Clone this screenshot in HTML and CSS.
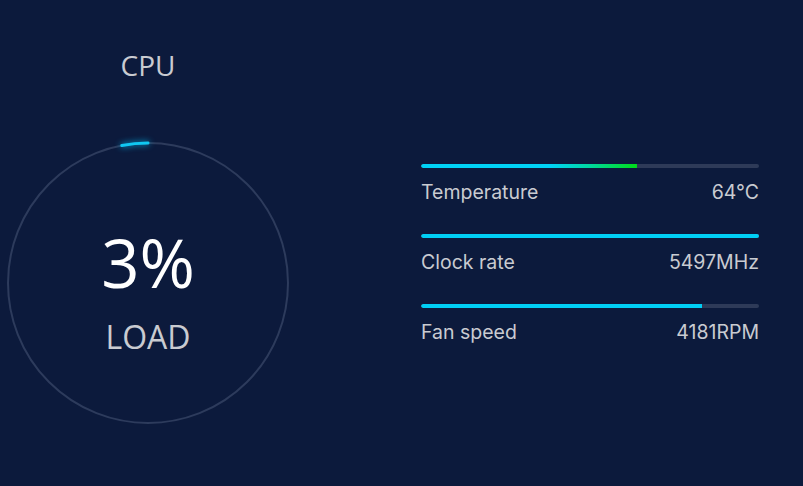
FILE: index.html
```html
<!DOCTYPE html>
<html>
<head>
<meta charset="utf-8">
<link rel="stylesheet" href="styles.css">
</head>
<body>
<div class="panel">
  <div class="left">
    <div class="title">CPU</div>
    <div class="gauge">
      <svg class="ring" width="296" height="296" viewBox="0 0 296 296">
        <circle class="track" cx="148" cy="148" r="140"></circle>
        <path class="arc" d="M121.77 10.48 A140 140 0 0 1 148 8"></path>
      </svg>
      <div class="readout">
        <div class="value">3%</div>
        <div class="label">LOAD</div>
      </div>
    </div>
  </div>
  <div class="right">
    <div class="stat">
      <div class="bar"><div class="fill fill-temp" style="width:64%"></div></div>
      <div class="row"><span>Temperature</span><span>64°C</span></div>
    </div>
    <div class="stat">
      <div class="bar"><div class="fill" style="width:100%"></div></div>
      <div class="row"><span>Clock rate</span><span>5497MHz</span></div>
    </div>
    <div class="stat">
      <div class="bar"><div class="fill" style="width:83.1%"></div></div>
      <div class="row"><span>Fan speed</span><span>4181RPM</span></div>
    </div>
  </div>
</div>
</body>
</html>
```
FILE: styles.css
```css
html, body {
  margin: 0;
  padding: 0;
  background: #0c1a3c;
  width: 803px;
  height: 486px;
  overflow: hidden;
}
.panel {
  display: flex;
  align-items: flex-start;
}
.left {
  width: 296px;
  display: flex;
  flex-direction: column;
  align-items: center;
}
.title {
  font-family: "Open Sans", sans-serif;
  font-size: 28px;
  line-height: 36px;
  color: #c9cbd1;
  margin-top: 47px;
}
.gauge {
  position: relative;
  width: 296px;
  height: 296px;
  margin-top: 52px;
}
.ring {
  display: block;
}
.track {
  fill: none;
  stroke: #2d3b5c;
  stroke-width: 2;
}
.arc {
  fill: none;
  stroke: #10c8f2;
  stroke-width: 3;
  stroke-linecap: round;
  filter: drop-shadow(0 0 3px #00b8f0);
}
.readout {
  position: absolute;
  left: 0;
  top: 0;
  width: 296px;
  height: 296px;
  box-sizing: border-box;
  padding-top: 92px;
  display: flex;
  flex-direction: column;
  align-items: center;
  font-family: "Open Sans", sans-serif;
}
.value {
  font-size: 67px;
  line-height: 70px;
  color: #ffffff;
}
.label {
  font-size: 32px;
  line-height: 40px;
  color: #c9cbd1;
  margin-top: 20px;
}
.right {
  width: 338px;
  margin-left: 125px;
  margin-top: 164px;
  display: flex;
  flex-direction: column;
  gap: 30px;
}
.bar {
  height: 4px;
  border-radius: 2px;
  background: #2e3a58;
  overflow: hidden;
}
.fill {
  height: 100%;
  background: #00cff5;
  border-radius: 2px 0 0 2px;
}
.fill-temp {
  background: linear-gradient(90deg, #00d2f6 0%, #00d2f6 60%, #00d8a0 78%, #00dc18 100%);
}
.row {
  display: flex;
  justify-content: space-between;
  font-family: "Inter", sans-serif;
  font-size: 19.5px;
  line-height: 24px;
  color: #c9cbd1;
  margin-top: 12px;
}
```
